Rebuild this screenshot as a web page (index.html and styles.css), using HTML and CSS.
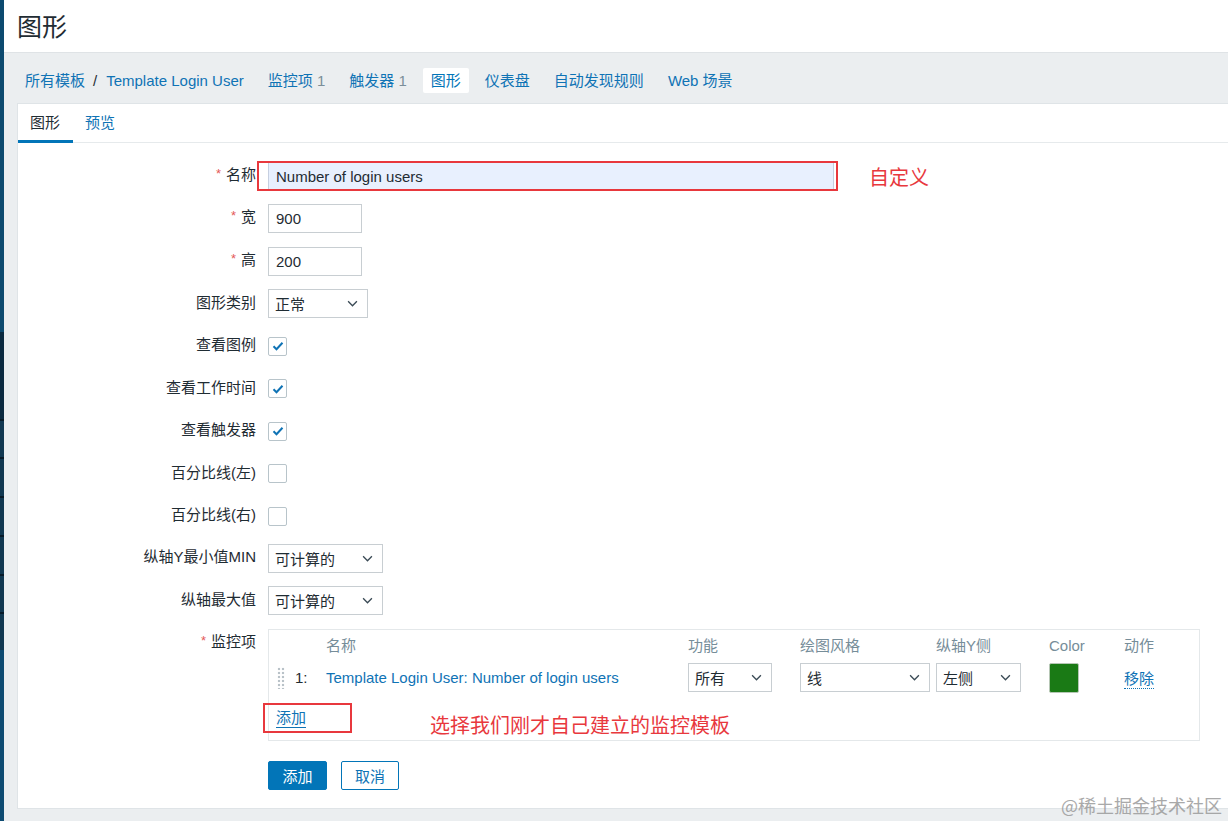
FILE: index.html
```html
<!DOCTYPE html>
<html lang="zh-CN">
<head>
<meta charset="utf-8">
<title>图形</title>
<link rel="stylesheet" href="styles.css">
</head>
<body>
<div class="app">
  <div class="strip"></div>
  <div class="main">
    <header class="page-head"><h1 class="page-title">图形</h1></header>
    <div class="content">
      <nav class="crumbs">
        <span class="crumb"><a class="lnk">所有模板</a><span class="sep">/</span><a class="lnk">Template Login User</a></span>
        <span class="crumb"><a class="lnk">监控项</a> <span class="cnt">1</span></span>
        <span class="crumb"><a class="lnk">触发器</a> <span class="cnt">1</span></span>
        <span class="crumb crumb-active">图形</span>
        <span class="crumb"><a class="lnk">仪表盘</a></span>
        <span class="crumb"><a class="lnk">自动发现规则</a></span>
        <span class="crumb"><a class="lnk">Web 场景</a></span>
      </nav>
      <div class="panel">
        <div class="tabs">
          <span class="tab tab-active">图形</span>
          <span class="tab">预览</span>
        </div>
        <div class="form-grid">
          <label class="lbl"><span class="req">*</span>名称</label>
          <div class="field">
            <span class="name-wrap">
              <span class="input input-name">Number of login users</span>
              <span class="annot-box annot-name"></span>
              <span class="annot-text annot-name-text">自定义</span>
            </span>
          </div>

          <label class="lbl"><span class="req">*</span>宽</label>
          <div class="field"><span class="input input-num">900</span></div>

          <label class="lbl"><span class="req">*</span>高</label>
          <div class="field"><span class="input input-num">200</span></div>

          <label class="lbl">图形类别</label>
          <div class="field">
            <span class="select sel-type">正常<svg class="chev" viewBox="0 0 10 6"><path d="M1 1l4 4 4-4"/></svg></span>
          </div>

          <label class="lbl">查看图例</label>
          <div class="field"><span class="check checked"><svg viewBox="0 0 12 10"><path d="M1.5 5.2l3 3 6-6.5"/></svg></span></div>

          <label class="lbl">查看工作时间</label>
          <div class="field"><span class="check checked"><svg viewBox="0 0 12 10"><path d="M1.5 5.2l3 3 6-6.5"/></svg></span></div>

          <label class="lbl">查看触发器</label>
          <div class="field"><span class="check checked"><svg viewBox="0 0 12 10"><path d="M1.5 5.2l3 3 6-6.5"/></svg></span></div>

          <label class="lbl">百分比线(左)</label>
          <div class="field"><span class="check"></span></div>

          <label class="lbl">百分比线(右)</label>
          <div class="field"><span class="check"></span></div>

          <label class="lbl">纵轴Y最小值MIN</label>
          <div class="field">
            <span class="select sel-axis">可计算的<svg class="chev" viewBox="0 0 10 6"><path d="M1 1l4 4 4-4"/></svg></span>
          </div>

          <label class="lbl">纵轴最大值</label>
          <div class="field">
            <span class="select sel-axis">可计算的<svg class="chev" viewBox="0 0 10 6"><path d="M1 1l4 4 4-4"/></svg></span>
          </div>

          <label class="lbl lbl-top"><span class="req">*</span>监控项</label>
          <div class="items">
            <div class="items-row items-head">
              <span class="c-handle"></span>
              <span class="c-num"></span>
              <span class="c-name">名称</span>
              <span class="c-func">功能</span>
              <span class="c-style">绘图风格</span>
              <span class="c-side">纵轴Y侧</span>
              <span class="c-color">Color</span>
              <span class="c-act">动作</span>
            </div>
            <div class="items-row items-item">
              <span class="c-handle"><span class="handle"></span></span>
              <span class="c-num">1:</span>
              <span class="c-name"><a class="lnk">Template Login User: Number of login users</a></span>
              <span class="c-func"><span class="select sel-func">所有<svg class="chev" viewBox="0 0 10 6"><path d="M1 1l4 4 4-4"/></svg></span></span>
              <span class="c-style"><span class="select sel-style">线<svg class="chev" viewBox="0 0 10 6"><path d="M1 1l4 4 4-4"/></svg></span></span>
              <span class="c-side"><span class="select sel-side">左侧<svg class="chev" viewBox="0 0 10 6"><path d="M1 1l4 4 4-4"/></svg></span></span>
              <span class="c-color"><span class="swatch"></span></span>
              <span class="c-act"><a class="lnk dotted">移除</a></span>
            </div>
            <div class="items-add">
              <a class="lnk add-link">添加</a>
              <span class="annot-box annot-add"></span>
              <span class="annot-text annot-add-text">选择我们刚才自己建立的监控模板</span>
            </div>
          </div>

          <span class="spacer"></span>
          <div class="buttons">
            <button class="btn btn-primary">添加</button>
            <button class="btn btn-alt">取消</button>
          </div>
        </div>
      </div>
    </div>
  </div>
</div>
<div class="watermark">@稀土掘金技术社区</div>
</body>
</html>
```
FILE: styles.css
```css
* { box-sizing: border-box; }
html, body { margin: 0; padding: 0; }
body {
  font-family: "Liberation Sans", Arial, "Noto Sans CJK SC", sans-serif;
  font-size: 15px;
  color: #1f2c33;
  background: #ebeef0;
  width: 1228px;
  height: 821px;
  overflow: hidden;
  position: relative;
}
.app { display: flex; min-height: 821px; }
.strip {
  width: 4px;
  flex: 0 0 4px;
  background: linear-gradient(to bottom,
    #0d4a6f 0, #0d4a6f 332px,
    #0b2a40 332px, #0b2a40 419px,
    #071a28 419px, #071a28 421px,
    #113851 421px, #113851 457px,
    #071a28 457px, #071a28 459px,
    #113851 459px, #113851 496px,
    #071a28 496px, #071a28 498px,
    #113851 498px, #113851 535px,
    #071a28 535px, #071a28 537px,
    #113851 537px, #113851 574px,
    #071a28 574px, #071a28 576px,
    #113851 576px, #113851 612px,
    #071a28 612px, #071a28 614px,
    #113851 614px, #113851 650px,
    #0e4b72 650px, #0e4b72 100%);
}
.main { flex: 1; display: flex; flex-direction: column; min-width: 0; }
.page-head {
  background: #fff;
  height: 53px;
  border-bottom: 1px solid #dfe3e6;
  display: flex;
  align-items: center;
  padding-left: 13px;
}
.page-title {
  margin: 0;
  font-family: "Noto Sans CJK SC", sans-serif;
  font-weight: 400;
  font-size: 25px;
  line-height: 1;
  color: #1f2c33;
  position: relative;
  top: -1px;
}
.content { padding-left: 13px; flex: 1; display: flex; flex-direction: column; }
.crumbs {
  height: 50px;
  display: flex;
  align-items: center;
  gap: 8px;
  padding-top: 4px;
}
.crumb {
  padding: 0 8px;
  line-height: 25px;
  height: 25px;
  white-space: nowrap;
  font-family: "Liberation Sans", Arial, "Noto Sans CJK SC", sans-serif;
}
.crumb-active { background: #fff; color: #0275b8; border-radius: 2px; }
.lnk { color: #0f73b5; text-decoration: none; }
.sep { color: #1f2c33; margin: 0 9px 0 8px; }
.cnt { color: #7b8e99; }
.panel {
  background: #fff;
  border: 1px solid #dfe4e7;
  border-right: none;
}
.tabs {
  height: 39px;
  border-bottom: 1px solid #e6eaec;
  display: flex;
  align-items: stretch;
}
.tab {
  padding: 0 13px 0 12px;
  display: flex;
  align-items: center;
  color: #0f73b5;
  font-family: "Noto Sans CJK SC", sans-serif;
  font-size: 15px;
  border-bottom: 3px solid transparent;
  margin-bottom: -1px;
  padding-bottom: 2px;
}
.tab + .tab { padding-left: 12px; }
.tab-active { color: #1f2c33; border-bottom-color: #0275b8; }
.form-grid {
  display: grid;
  grid-template-columns: 238px 1fr;
  column-gap: 12px;
  row-gap: 13.45px;
  padding: 19px 0 18.5px 0;
}
.lbl {
  text-align: right;
  align-self: center;
  font-family: "Liberation Sans", Arial, "Noto Sans CJK SC", sans-serif;
  white-space: nowrap;
  line-height: 20px;
  position: relative;
  top: -1px;
}
.lbl-top { align-self: start; padding-top: 4px; }
.req { color: #e45959; font-size: 13px; margin-right: 5px; position: relative; top: -2px; }
.field { min-height: 29px; display: flex; align-items: center; }
.input {
  display: inline-flex;
  align-items: center;
  height: 29px;
  border: 1px solid #c8ced2;
  background: #fff;
  padding: 0 7px;
  white-space: nowrap;
}
.input-name { width: 566px; background: #e8f0fe; border-color: #c6cfe0; }
.input-num { width: 94px; }
.name-wrap { position: relative; display: inline-block; height: 29px; }
.annot-box {
  position: absolute;
  border: 2px solid #e8383d;
  pointer-events: none;
}
.annot-name { left: -11px; top: -1px; width: 581px; height: 30px; }
.annot-text {
  position: absolute;
  color: #e8383d;
  font-family: "Noto Sans CJK SC", sans-serif;
  font-size: 20px;
  white-space: nowrap;
  line-height: 1;
}
.annot-name-text { left: 601px; top: 5px; }
.select {
  display: inline-flex;
  align-items: center;
  justify-content: space-between;
  height: 29px;
  border: 1px solid #c8ced2;
  background: #fff;
  padding: 0 9px 0 6px;
  white-space: nowrap;
  font-family: "Liberation Sans", Arial, "Noto Sans CJK SC", sans-serif;
}
.chev { width: 11px; height: 7px; fill: none; stroke: #3a4a55; stroke-width: 1.2; flex: 0 0 auto; }
.sel-type { width: 100px; }
.sel-axis { width: 115px; }
.sel-func { width: 84px; }
.sel-style { width: 130px; }
.sel-side { width: 85px; }
.check {
  width: 19px;
  height: 19px;
  border: 1px solid #b8c4ca;
  border-radius: 2px;
  background: #fff;
  display: inline-flex;
  align-items: center;
  justify-content: center;
}
.check svg { width: 12px; height: 10px; fill: none; stroke: #0f73b5; stroke-width: 2; }
.items {
  border: 1px solid #e4e8ea;
  width: 932px;
  padding: 6px 0 12px 7px;
  position: relative;
}
.items-row {
  display: grid;
  grid-template-columns: 19px 31px 362px 112px 136px 113px 75px 1fr;
  align-items: center;
}
.items-head { height: 20px; line-height: 20px; color: #768d99; font-size: 15px; }
.items-item { height: 29px; margin-top: 7px; }
.c-num { color: #1f2c33; }
.handle {
  display: block;
  width: 8px;
  height: 22px;
  margin-left: 1px;
  background-image: radial-gradient(circle, #b9c2c8 1.3px, transparent 1.6px);
  background-size: 4px 4px;
}
.swatch {
  display: block;
  width: 30px;
  height: 30px;
  background: #1a7a15;
  border: 1px solid #b6c7b5;
  border-radius: 2px;
}
.dotted { border-bottom: 1px dotted #0f73b5; padding-bottom: 1px; }
.items-add { position: relative; margin-top: 16px; height: 20px; line-height: 20px; }
.add-link { border-bottom: 1px solid #0f73b5; padding-bottom: 1px; }
.annot-add { left: -13px; top: -5px; width: 89px; height: 30px; }
.annot-add-text { left: 154px; top: 7px; }
.spacer { display: block; }
.buttons { display: flex; gap: 14px; margin-top: 6.5px; }
.btn {
  height: 29px;
  padding: 0;
  font-family: "Noto Sans CJK SC", sans-serif;
  font-size: 15px;
  white-space: nowrap;
  border-radius: 2px;
  border: 1px solid #0275b8;
  cursor: pointer;
  display: inline-flex;
  align-items: center;
  justify-content: center;
}
.btn-primary { background: #0275b8; color: #fff; width: 59px; }
.btn-alt { background: #fff; color: #0f73b5; width: 58px; }
.watermark {
  position: absolute;
  right: 6px;
  bottom: 7px;
  color: #9b9b9b;
  font-family: "Noto Sans CJK SC", sans-serif;
  font-size: 18px;
  line-height: 1;
  opacity: 0.85;
}
```
